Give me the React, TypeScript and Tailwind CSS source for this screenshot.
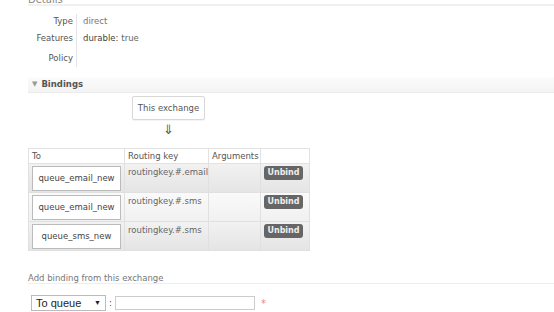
import React from 'react'

type Binding = {
    queue: string;
    routingKey: string;
};

const bindings: Binding[] = [
    { queue: "queue_email_new", routingKey: "routingkey.#.email" },
    { queue: "queue_email_new", routingKey: "routingkey.#.sms" },
    { queue: "queue_sms_new", routingKey: "routingkey.#.sms" },
];

const App = () => {
    return (
        <div className="w-[554px] h-[312px] overflow-hidden bg-white font-['DejaVu_Sans',sans-serif] text-[8.5px] text-[#555]">
            {/* DETAILS */}
            <div className="pl-[28px] -mt-[6px]">
                <div className="h-[12px] leading-[12px] text-[10px] text-[#888] border-b-[2px] border-[#f0f0f0]">Details</div>
                <div className="flex pt-[8px] pb-[6px]">
                    <div className="w-[45px] flex flex-col items-end text-[#555]">
                        <div className="h-[15px] leading-[14px]">Type</div>
                        <div className="h-[18px] leading-[18px]">Features</div>
                        <div className="h-[20px] leading-[22px]">Policy</div>
                    </div>
                    <div className="ml-[3px] border-l border-[#e4e4e4] pl-[6px] flex flex-col">
                        <div className="h-[15px] leading-[14px] text-[#777]">direct</div>
                        <div className="h-[18px] leading-[18px]">
                            <span className="text-[#444]">durable:</span>
                            <span className="ml-[3px] text-[#666]">true</span>
                        </div>
                        <div className="h-[20px]" />
                    </div>
                </div>
            </div>

            {/* BINDINGS */}
            <div className="pl-[28px] mt-[4px]">
                <div className="h-[16px] flex items-center gap-[4px] pl-[4px] bg-gradient-to-b from-[#fcfcfc] to-[#f3f3f3] border-b border-[#ececec]">
                    <span className="text-[7px] text-[#999]">▼</span>
                    <span className="font-bold text-[#555]">Bindings</span>
                </div>

                <div className="flex flex-col items-center w-[281px] pt-[3px]">
                    <div className="w-[73px] h-[24px] flex items-center justify-center border border-[#d8d8d8] rounded-[2px] bg-white shadow-[0_1px_1px_rgba(0,0,0,0.05)] text-[#555]">
                        This exchange
                    </div>
                    <div className="h-[19px] leading-[19px] text-[13px] text-[#555]">⇓</div>
                </div>

                <table className="mt-[9px] w-[281px] table-fixed border-collapse border border-[#d6d6d6]">
                    <colgroup>
                        <col className="w-[96px]" />
                        <col className="w-[84px]" />
                        <col className="w-[52px]" />
                        <col className="w-[49px]" />
                    </colgroup>
                    <thead>
                        <tr className="h-[15px] bg-white text-[#555]">
                            <th className="font-normal text-left pl-[3px] border border-[#e2e2e2]">To</th>
                            <th className="font-normal text-left pl-[3px] border border-[#e2e2e2]">Routing key</th>
                            <th className="font-normal text-left pl-[3px] border border-[#e2e2e2]">Arguments</th>
                            <th className="border border-[#e2e2e2]"></th>
                        </tr>
                    </thead>
                    <tbody>
                        {bindings.map((b, idx) => (
                            <tr
                                key={idx}
                                className={`h-[29px] ${idx % 2 === 0
                                    ? "bg-gradient-to-b from-[#f2f2f2] to-[#e4e4e4]"
                                    : "bg-gradient-to-b from-[#fafafa] to-[#f0f0f0]"}`}
                            >
                                <td className="px-[3px] py-[1px] border border-[#e0e0e0]">
                                    <div className="h-[25px] flex items-center justify-center bg-white border border-[#bbb] text-[#444]">
                                        {b.queue}
                                    </div>
                                </td>
                                <td className="align-top pl-[3px] pt-[2px] text-[#666] border border-[#e0e0e0] whitespace-nowrap">{b.routingKey}</td>
                                <td className="border border-[#e0e0e0]"></td>
                                <td className="align-top pt-[2px] pl-[3px] border border-[#e0e0e0]">
                                    <span className="inline-flex items-center justify-center w-[39px] h-[14px] rounded-[3px] bg-[#666] text-[#eee] text-[8px] font-bold">
                                        Unbind
                                    </span>
                                </td>
                            </tr>
                        ))}
                    </tbody>
                </table>
            </div>

            {/* ADD BINDING */}
            <div className="pl-[28px] mt-[21px]">
                <div className="h-[12px] leading-[12px] text-[#777] border-b border-[#eee] pb-[1px]">Add binding from this exchange</div>
                <div className="flex items-center mt-[11px] pl-[3px]">
                    <div className="w-[75px] h-[16px] flex items-center justify-between px-[4px] border border-[#bbb] bg-white font-['Liberation_Sans',sans-serif] text-[11px] text-[#222]">
                        <span>To queue</span>
                        <span className="text-[7px]">▼</span>
                    </div>
                    <span className="ml-[3px] mr-[3px] text-[#444]">:</span>
                    <div className="w-[140px] h-[14px] border border-[#ccc] bg-white" />
                    <span className="ml-[6px] text-[#e88] text-[10px]">*</span>
                </div>
            </div>
        </div>
    )
}

export default App
